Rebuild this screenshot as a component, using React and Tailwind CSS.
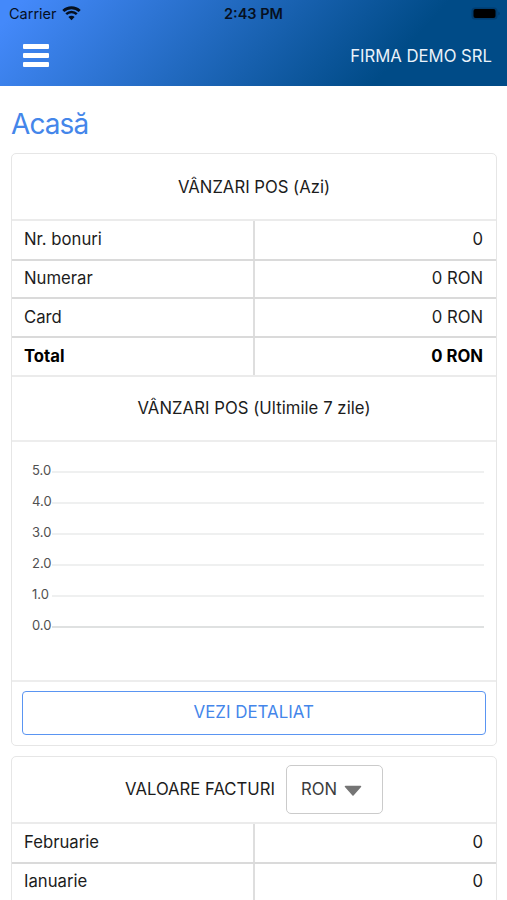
const sales = [
  { label: "Nr. bonuri", value: "0" },
  { label: "Numerar", value: "0 RON" },
  { label: "Card", value: "0 RON" },
  { label: "Total", value: "0 RON", bold: true },
];

const invoices = [
  { label: "Februarie", value: "0" },
  { label: "Ianuarie", value: "0" },
];

const ticks = ["5.0", "4.0", "3.0", "2.0", "1.0", "0.0"];

function WifiIcon() {
  return (
    <svg className="ml-[5px] h-[15px] w-[19px]" viewBox="0 0 19 15" fill="none">
      <path d="M1.3 5a11.8 11.8 0 0 1 16.4 0" stroke="#06101f" strokeWidth="2.9" />
      <path d="M4.2 8.2a7.6 7.6 0 0 1 10.6 0" stroke="#06101f" strokeWidth="2.5" />
      <path d="M9.5 14.3 6.4 11.1a4.4 4.4 0 0 1 6.2 0z" fill="#06101f" />
    </svg>
  );
}

function BatteryIcon() {
  return (
    <svg className="h-[14px] w-[30px]" viewBox="0 0 30 14">
      <rect x="0.5" y="0.5" width="26" height="12" rx="3.5" fill="#003d70" />
      <rect x="2.5" y="2" width="22" height="9" rx="2" fill="#000" />
      <path d="M27.5 4.5v4c1.4-.6 1.4-3.4 0-4z" fill="#003765" />
    </svg>
  );
}

function Table({ rows }) {
  return (
    <div className="flex flex-col border-t-2 border-[#ebebeb]">
      {rows.map((row, i) => (
        <div
          key={row.label}
          className={`grid shrink-0 grid-cols-[243px_1fr] items-stretch text-[16.7px] text-[#1c1c1c] ${
            i > 0 ? "h-[38.7px] border-t-2 border-[#dadada]" : "h-[37.5px]"
          } ${row.bold ? "font-bold text-black" : ""}`}
        >
          <div className="flex items-center border-r-2 border-[#dedede] pl-3">{row.label}</div>
          <div className="flex items-center justify-end pr-[13px]">{row.value}</div>
        </div>
      ))}
    </div>
  );
}

function Chart() {
  return (
    <div className="h-[240px] border-t-2 border-[#ededed] pt-[13px] pr-3 pl-5">
      {ticks.map((tick) => (
        <div key={tick} className="flex h-[31px] items-center">
          <span className="w-5 text-[13px] leading-none text-[#505050]">{tick}</span>
          <span
            className={`mt-[3px] h-[2px] flex-1 ${tick === "0.0" ? "bg-[#dfe1e1]" : "bg-[#eff0f0]"}`}
          />
        </div>
      ))}
    </div>
  );
}

export default function App() {
  return (
    <div className="h-[900px] w-[507px] overflow-hidden bg-white font-['Inter','Liberation_Sans',sans-serif]">
      {/* Header */}
      <header className="h-[86px] bg-[linear-gradient(132deg,#4489fa_4%,#004b87_77%)] text-[#06101f]">
        <div className="grid h-[27px] grid-cols-3 items-center pr-[6px] pl-[9px]">
          <div className="flex items-center text-[14.5px]">
            Carrier
            <WifiIcon />
          </div>
          <div className="-ml-[3px] text-center text-[14.5px] font-semibold">2:43 PM</div>
          <div className="flex justify-end">
            <BatteryIcon />
          </div>
        </div>
        <div className="flex h-[58px] items-center justify-between pr-[15px] pl-[23px]">
          <button className="-mt-px flex flex-col gap-1">
            <span className="h-[5px] w-[26px] rounded-[1px] bg-white" />
            <span className="h-[5px] w-[26px] rounded-[1px] bg-white" />
            <span className="h-[5px] w-[26px] rounded-[1px] bg-white" />
          </button>
          <span className="pt-px text-[16.7px] text-[#eaf2fa]">FIRMA DEMO SRL</span>
        </div>
      </header>

      {/* Page content */}
      <main className="pr-[10px] pl-[11px]">
        <h1 className="flex h-[67px] items-center pt-[9px] text-[28px] tracking-[-0.9px] text-[#4486ea]">
          Acasă
        </h1>

        <section className="h-[593px] rounded-[5px] border-[1.5px] border-[#e6e6e6]">
          <h2 className="flex h-[65px] items-center justify-center pt-[2px] text-[16.7px] text-[#1c1c1c]">
            VÂNZARI POS (Azi)
          </h2>
          <Table rows={sales} />
          <h2 className="flex h-[65px] items-center justify-center border-t-2 border-[#ebebeb] text-[16.7px] tracking-[0.05px] text-[#1c1c1c]">
            VÂNZARI POS (Ultimile 7 zile)
          </h2>
          <Chart />
          <div className="border-t-2 border-[#ededed] pt-[9px] pr-[10px] pl-[9.5px]">
            <button className="h-[44px] w-full rounded-[4px] border-[1.5px] border-[#5a95f2] pt-px text-[16.9px] text-[#4486ea]">
              VEZI DETALIAT
            </button>
          </div>
        </section>

        <section className="mt-[10px] rounded-t-[5px] border-[1.5px] border-[#e6e6e6]">
          <div className="flex h-[65px] items-center justify-center gap-[11px] pt-px text-[16.7px] text-[#1c1c1c]">
            VALOARE FACTURI
            <button className="-mt-px flex h-[49px] w-[97px] items-center gap-[7px] rounded-[5px] border-[1.5px] border-[#cbcbcb] pt-px pl-[14px] text-[#3c3c3c]">
              RON
              <svg className="h-[11px] w-[18px]" viewBox="0 0 18 11">
                <path d="M1.5 1.5h15L9 10z" fill="#757575" stroke="#757575" strokeWidth="1.5" strokeLinejoin="round" />
              </svg>
            </button>
          </div>
          <Table rows={invoices} />
          <div className="h-5 border-t-2 border-[#dadada]" />
        </section>
      </main>
    </div>
  );
}
